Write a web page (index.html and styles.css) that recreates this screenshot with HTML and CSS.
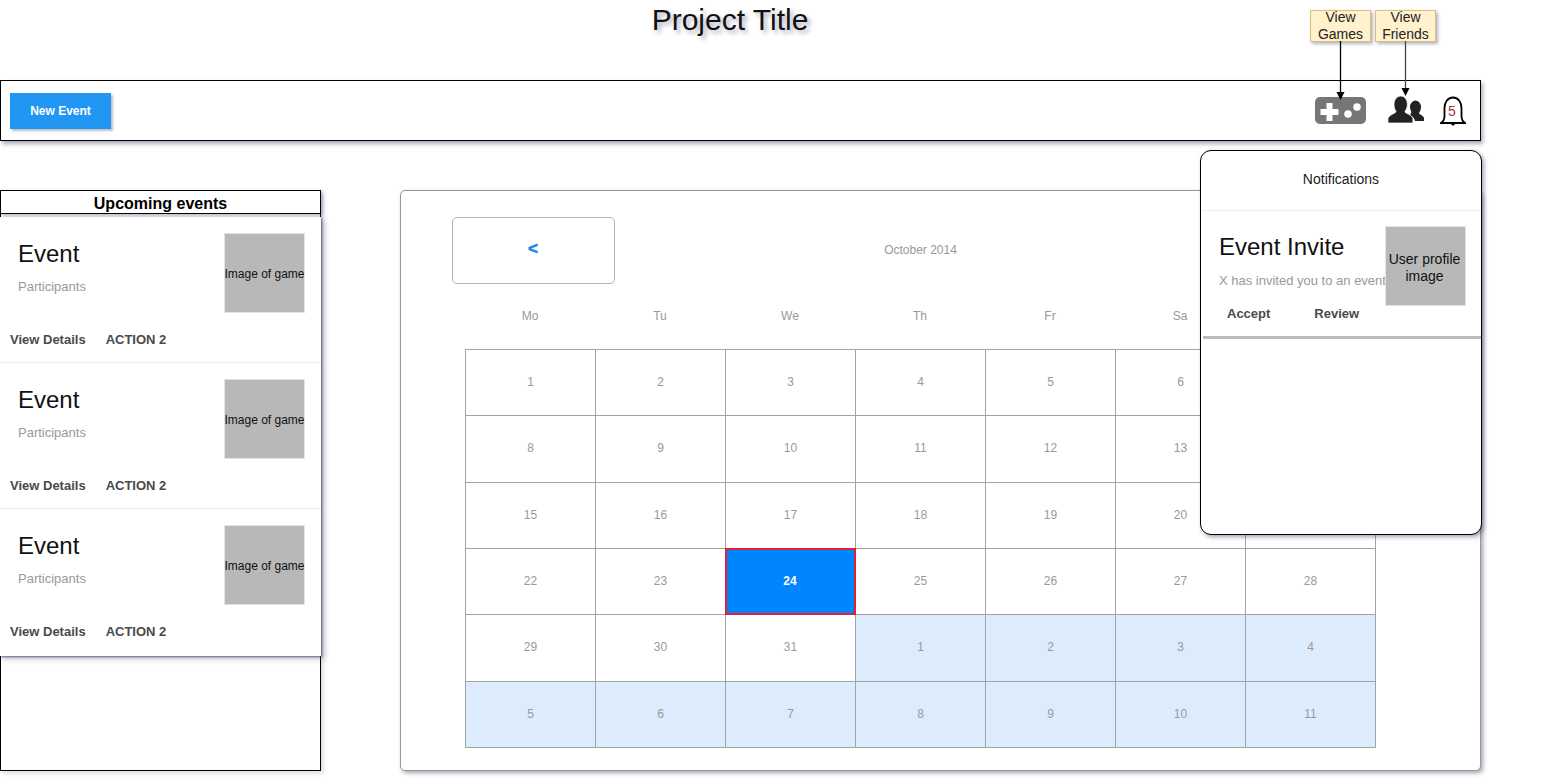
FILE: index.html
```html
<!DOCTYPE html>
<html lang="en">
<head>
<meta charset="utf-8">
<title>Project Title</title>
<link rel="stylesheet" href="styles.css">
</head>
<body>
<div class="page">
  <header class="title-row">
    <h1 class="title">Project Title</h1>
  </header>
  <nav class="toolbar">
    <button class="new-event">New Event</button>
    <div class="tools">
      <svg class="icon-game" viewBox="0 0 51 27" aria-label="Games"><rect width="51" height="27" rx="5" fill="#767676"/><path d="M11.500 6h6v6h6v6h-6v6h-6v-6h-6v-6h6z" fill="#fff"/><circle cx="33" cy="17" r="3.800" fill="#fff"/><circle cx="42" cy="10" r="3.800" fill="#fff"/></svg>
      <svg class="icon-friends" viewBox="0 0 37 30" aria-label="Friends"><path d="M23 12a5.500 6.500 0 0 1 11 0c0 2.500-1 4.500-2 6 0 1.500 4 2 5 5v3H28c-.5-3-3-5-5-6 .8-1 .8-2 1.500-3-1-2-1.500-3-1.500-5z" fill="#222"/><path d="M7 9a6.700 8 0 0 1 13.400 0c0 3-1 5.500-2.500 7.500 0 2 7 3 8 7v4.500H1v-4.500c1-4 8-5 8-7C7.800 14.500 7 12 7 9z" fill="#222" stroke="#fff" stroke-width=".7"/></svg>
      <div class="bell">
        <svg viewBox="0 0 26 30" aria-hidden="true"><path d="M13 1.500C7.500 1.500 4.500 6.500 4.500 12v8c0 4-2 6-3.500 7h24c-1.500-1-3.500-3-3.500-7v-8c0-5.500-3-10.500-8.500-10.500z" fill="#fff" stroke="#000" stroke-width="1.800"/><path d="M10.500 27.500h5L13 30z" fill="#000"/></svg>
        <span class="bell-count">5</span>
      </div>
    </div>
  </nav>
  <main class="content">
    <aside class="sidebar">
      <h2 class="side-title">Upcoming events</h2>
      <div class="event-list">
        <article class="event">
          <div class="event-top">
            <div><div class="heading">Event</div><div class="sub">Participants</div></div>
            <div class="thumb">Image of game</div>
          </div>
          <div class="actions"><span>View Details</span><span>ACTION 2</span></div>
        </article>
        <article class="event">
          <div class="event-top">
            <div><div class="heading">Event</div><div class="sub">Participants</div></div>
            <div class="thumb">Image of game</div>
          </div>
          <div class="actions"><span>View Details</span><span>ACTION 2</span></div>
        </article>
        <article class="event">
          <div class="event-top">
            <div><div class="heading">Event</div><div class="sub">Participants</div></div>
            <div class="thumb">Image of game</div>
          </div>
          <div class="actions"><span>View Details</span><span>ACTION 2</span></div>
        </article>
      </div>
    </aside>
    <section class="calendar">
      <div class="cal-head">
        <button class="prev">&lt;</button>
        <div class="month">October 2014</div>
      </div>
      <div class="weekdays">
        <span>Mo</span><span>Tu</span><span>We</span><span>Th</span><span>Fr</span><span>Sa</span><span>Su</span>
      </div>
      <div class="grid">
        <div class="cell">1</div><div class="cell">2</div><div class="cell">3</div><div class="cell">4</div><div class="cell">5</div><div class="cell">6</div><div class="cell">7</div>
        <div class="cell">8</div><div class="cell">9</div><div class="cell">10</div><div class="cell">11</div><div class="cell">12</div><div class="cell">13</div><div class="cell">14</div>
        <div class="cell">15</div><div class="cell">16</div><div class="cell">17</div><div class="cell">18</div><div class="cell">19</div><div class="cell">20</div><div class="cell">21</div>
        <div class="cell">22</div><div class="cell">23</div><div class="cell today">24</div><div class="cell">25</div><div class="cell">26</div><div class="cell">27</div><div class="cell">28</div>
        <div class="cell">29</div><div class="cell">30</div><div class="cell">31</div><div class="cell other">1</div><div class="cell other">2</div><div class="cell other">3</div><div class="cell other">4</div>
        <div class="cell other">5</div><div class="cell other">6</div><div class="cell other">7</div><div class="cell other">8</div><div class="cell other">9</div><div class="cell other">10</div><div class="cell other">11</div>
      </div>
    </section>
  </main>

  <aside class="notifications">
    <div class="notif-title">Notifications</div>
    <div class="notif-item">
      <div class="notif-top">
        <div class="notif-text"><div class="heading">Event Invite</div><div class="notif-sub">X has invited you to an event</div></div>
        <div class="thumb thumb-user">User profile image</div>
      </div>
      <div class="notif-actions"><span>Accept</span><span>Review</span></div>
    </div>
  </aside>

  <div class="note note-games">View Games</div>
  <div class="note note-friends">View Friends</div>
  <svg class="arrows" viewBox="0 0 130 60" aria-hidden="true">
    <path d="M30.500 0v53" stroke="#000" stroke-width="1.300" fill="none"/>
    <path d="M26.500 51h8l-4 8z" fill="#000"/>
    <path d="M95.500 0v49" stroke="#444" stroke-width="1.300" fill="none"/>
    <path d="M91.500 47h8l-4 8z" fill="#000"/>
  </svg>
</div>
</body>
</html>
```
FILE: styles.css
```css
* { box-sizing: border-box; }
html, body { margin: 0; height: 100%; overflow: hidden; background: #fff; }
body { font-family: "Liberation Sans", Arial, sans-serif; color: #000; }
.page { position: relative; width: 1542px; height: 782px; }

.title-row { height: 80px; width: 1460px; padding-top: 3px; text-align: center; }
.title { margin: 0; font-size: 30px; line-height: 34px; font-weight: 400; color: #111; text-shadow: 3px 3px 4px rgba(70, 70, 110, .45); }

.toolbar {
  display: flex; align-items: center; justify-content: space-between;
  width: 1481px; height: 61px; padding: 0 14px 0 9px;
  background: #fff; border: 1px solid #000;
  box-shadow: 2px 3px 4px rgba(70, 70, 110, .45);
}
.new-event {
  width: 101px; height: 36px; padding: 0; border: 0;
  background: #2196f3; color: #fff; font: 700 12px "Liberation Sans", Arial, sans-serif;
  box-shadow: 2px 2px 2px rgba(70, 70, 110, .35);
}
.tools { display: flex; align-items: center; }
.icon-game { display: block; width: 51px; height: 27px; }
.icon-friends { display: block; width: 37px; height: 30px; margin-left: 21px; margin-top: -2px; }
.bell { position: relative; width: 26px; height: 30px; margin-left: 16px; }
.bell svg { display: block; width: 100%; height: 100%; }
.bell-count { position: absolute; left: 0; right: 0; top: 8px; padding-right: 2px; text-align: center; font-size: 14px; line-height: 15px; color: #a33; }

.content { display: flex; gap: 79px; margin-top: 49px; width: 1481px; height: 581px; }
.sidebar {
  position: relative; width: 321px; height: 581px; border: 1px solid #000; background: #fff;
  box-shadow: 2px 2px 5px rgba(70, 70, 110, .22);
}
.side-title {
  margin: -1px -1px 0; height: 24px; padding-top: 2px; border: 1px solid #000; text-align: center;
  font-size: 16px; font-weight: 700; line-height: 21px;
  box-shadow: 2px 2px 3px rgba(70, 70, 110, .35);
}
.event-list {
  position: absolute; left: -1px; top: 26px; width: 321px; background: #fff;
  box-shadow: 1px 1px 2px rgba(50, 50, 90, .7), 3px 3px 6px rgba(70, 70, 110, .3);
}
.event { height: 146px; padding: 16px 16px 0 10px; border-bottom: 1px solid #eee; }
.event:last-child { height: 147px; border-bottom: 0; }
.event-top { display: flex; justify-content: space-between; padding-left: 8px; }
.heading { margin-top: 7px; font-size: 24px; line-height: 28px; color: #111; }
.sub { margin-top: 11px; font-size: 13px; line-height: 15px; color: #999; }
.thumb {
  display: flex; align-items: center; justify-content: center; width: 81px; height: 80px; padding-top: 2px;
  background: #b8b8b8; border: 1px solid #e4e4e4; font-size: 12px; line-height: 17px; color: #111; text-align: center; white-space: nowrap;
}
.actions { display: flex; gap: 20px; margin-top: 19px; font-size: 13px; line-height: 16px; font-weight: 700; color: #4a4a4a; }

.calendar {
  flex: 0 0 1081px; height: 581px; border: 1px solid #999; border-radius: 5px; background: #fff;
  padding: 26px 0 0 51px;
  box-shadow: 2px 2px 4px rgba(70, 70, 110, .5);
}
.cal-head { display: flex; align-items: center; height: 67px; }
.prev {
  width: 163px; height: 67px; padding: 0 1px 4px 0; border: 1px solid #b4b4b4; border-radius: 5px; background: #fff;
  color: #1a87e6; font: 700 17px "Liberation Sans", Arial, sans-serif; -webkit-text-stroke: .6px #1a87e6;
}
.month { width: 611px; padding-bottom: 2px; text-align: center; font-size: 12px; line-height: 14px; color: #999; }
.weekdays { display: grid; grid-template-columns: repeat(7, 130px); margin: 24px 0 0 13px; height: 41px; font-size: 12px; line-height: 16px; color: #999; text-align: center; }
.grid {
  display: grid; grid-template-columns: repeat(7, 130px); grid-auto-rows: 66.33px;
  width: 911px; margin-left: 13px; border-top: 1px solid #a3a3a3; border-left: 1px solid #a3a3a3;
}
.cell {
  display: flex; align-items: center; justify-content: center; padding-bottom: 1px;
  border-right: 1px solid #a3a3a3; border-bottom: 1px solid #a3a3a3;
  font-size: 12px; color: #999;
}
.other { background: #dcecfc; }
.today { margin: -1px 0 0 -1px; padding-right: 1px; background: #0085ff; color: #fff; font-weight: 700; border: 2px solid #e02033; }

.notifications {
  position: absolute; left: 1200px; top: 150px; width: 282px; height: 385px;
  background: #fff; border: 1px solid #000; border-radius: 11px;
  box-shadow: 2px 2px 4px rgba(70, 70, 110, .5);
}
.notif-title { height: 60px; border-bottom: 1px solid #eee; padding-top: 20px; text-align: center; font-size: 14px; line-height: 16px; color: #222; }
.notif-item { height: 128px; margin-left: 2px; padding-top: 15px; border-bottom: 3px solid #bbb; }
.notif-top { display: flex; padding-left: 16px; }
.notif-text { width: 166px; }
.notif-text .heading { margin-top: 7px; }
.notif-sub { margin-top: 12px; font-size: 13px; line-height: 15px; color: #999; white-space: nowrap; }
.thumb-user { font-size: 14px; white-space: normal; padding: 4px 3px 0 1px; flex: none; position: relative; }
.notif-actions { display: flex; gap: 44px; margin: 0 0 0 24px; font-size: 13px; line-height: 16px; font-weight: 700; color: #4a4a4a; }

.note {
  position: absolute; top: 10px; width: 61px; height: 32px;
  display: flex; align-items: center; justify-content: center;
  background: #fff2cc; border: 1px solid #d9c07a; text-align: center;
  font-size: 14px; line-height: 17px; color: #222;
  box-shadow: 2px 2px 3px rgba(70, 70, 110, .4);
}
.note-games { left: 1310px; }
.note-friends { left: 1375px; }
.arrows { position: absolute; left: 1310px; top: 41px; width: 130px; height: 60px; }
```
